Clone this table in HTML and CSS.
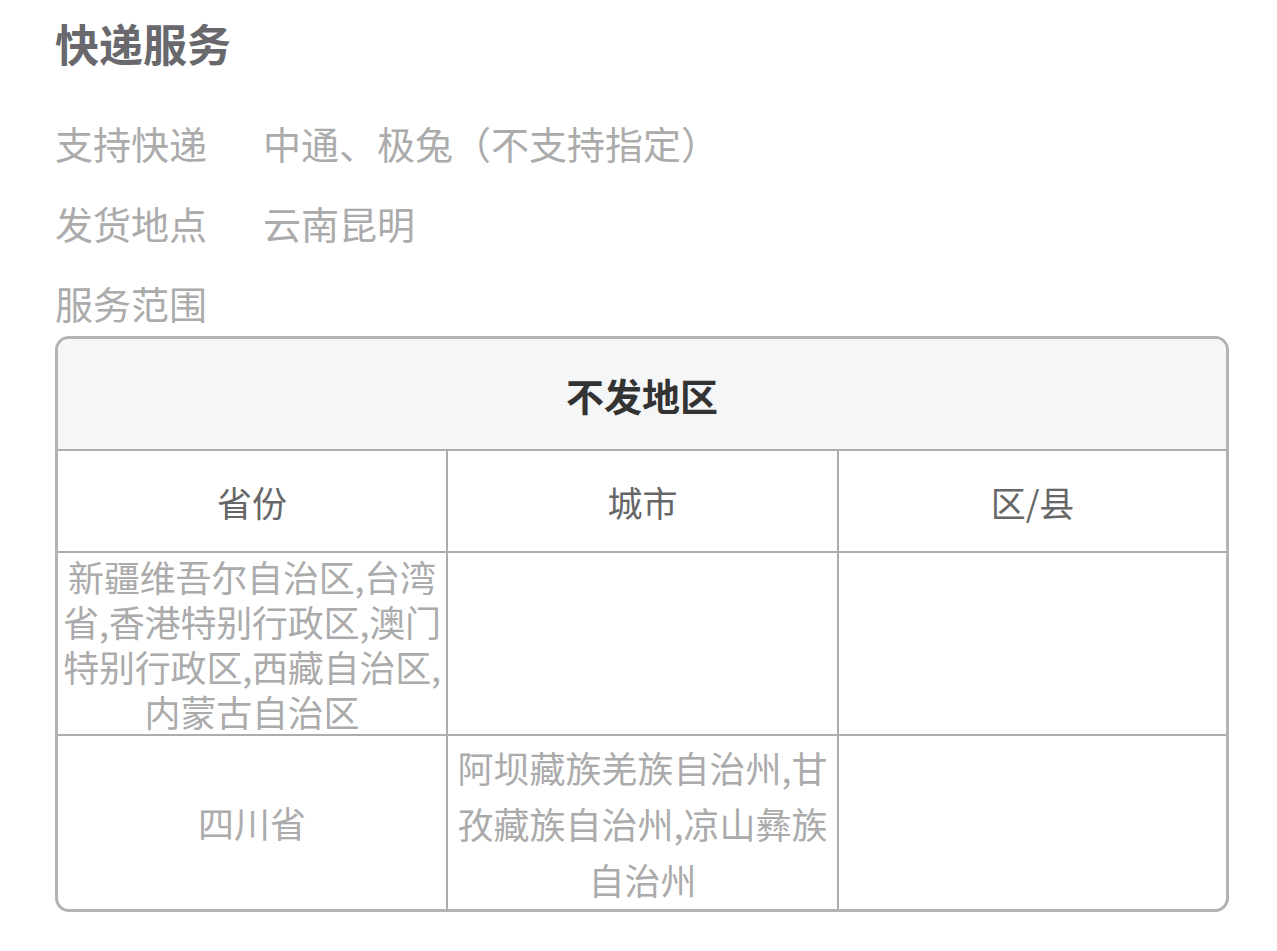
FILE: index.html
```html
<!DOCTYPE html>
<html lang="zh-CN">
<head>
<meta charset="utf-8">
<title>快递服务</title>
<link rel="stylesheet" href="styles.css">
</head>
<body>
<main class="page">
  <h1 class="title">快递服务</h1>
  <div class="info">
    <div class="info-row"><span class="label">支持快递</span><span class="value">中通、极兔（不支持指定）</span></div>
    <div class="info-row"><span class="label">发货地点</span><span class="value">云南昆明</span></div>
    <div class="info-row"><span class="label">服务范围</span></div>
  </div>
  <div class="area-table">
    <div class="cell head">不发地区</div>
    <div class="cell col-head">省份</div>
    <div class="cell col-head">城市</div>
    <div class="cell col-head last">区/县</div>
    <div class="cell body dense">新疆维吾尔自治区,台湾省,香港特别行政区,澳门特别行政区,西藏自治区,内蒙古自治区</div>
    <div class="cell body"></div>
    <div class="cell body last"></div>
    <div class="cell body final">四川省</div>
    <div class="cell body final loose">阿坝藏族羌族自治州,甘孜藏族自治州,凉山彝族自治州</div>
    <div class="cell body final last"></div>
  </div>
</main>
</body>
</html>
```

FILE: styles.css
```css
html, body {
  margin: 0;
  padding: 0;
  background: #ffffff;
}

body {
  font-family: "Noto Sans CJK SC", "Noto Sans", sans-serif;
}

.page {
  padding: 13px 48px 40px 55px;
}

.title {
  margin: 0;
  font-size: 44px;
  line-height: 60px;
  font-weight: 700;
  color: #68686d;
}

.info {
  display: flex;
  flex-direction: column;
  gap: 24px;
  margin-top: 41px;
}

.info-row {
  display: flex;
  align-items: center;
  height: 56px;
  font-size: 38px;
  color: #ababab;
}

.label {
  width: 208px;
  flex: none;
}

.area-table {
  margin-top: 6px;
  width: 1174px;
  box-sizing: border-box;
  border: 3px solid #b3b3b3;
  border-radius: 14px;
  overflow: hidden;
  display: grid;
  grid-template-columns: 390px 391px 1fr;
}

.cell {
  box-sizing: border-box;
  border-right: 2px solid #adadad;
  border-bottom: 2px solid #adadad;
  display: flex;
  align-items: center;
  justify-content: center;
  text-align: center;
  padding: 0;
}

.cell.last {
  border-right: none;
}

.cell.final {
  border-bottom: none;
}

.head {
  grid-column: 1 / -1;
  border-right: none;
  height: 112px;
  background: #f5f6f8;
  font-size: 38px;
  font-weight: 700;
  color: #333333;
}

.col-head {
  height: 102px;
  font-size: 35px;
  color: #666666;
}

.body {
  font-size: 36px;
  line-height: 45px;
  color: #ababab;
  min-height: 183px;
}

.body.final {
  min-height: 173px;
}

.dense {
  letter-spacing: -0.2px;
}

.loose {
  line-height: 56px;
}
```
